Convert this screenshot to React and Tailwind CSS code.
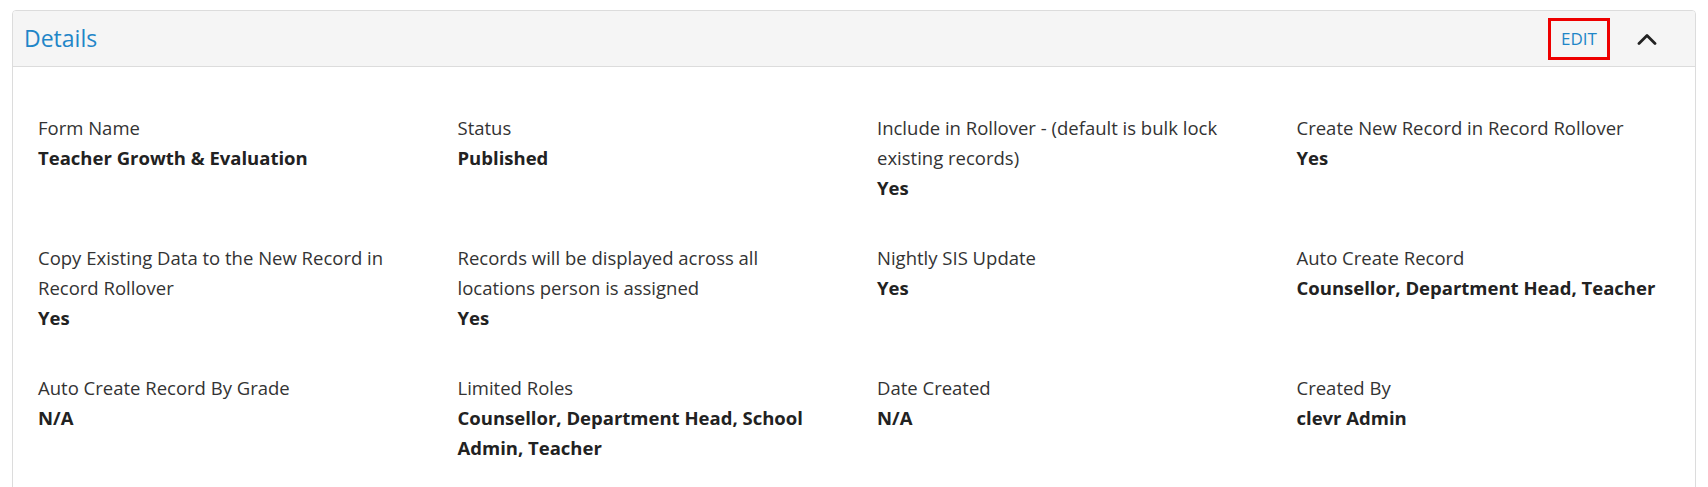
import React from 'react';

const fields = [
  { label: 'Form Name', value: 'Teacher Growth & Evaluation' },
  { label: 'Status', value: 'Published' },
  { label: 'Include in Rollover - (default is bulk lock existing records)', value: 'Yes' },
  { label: 'Create New Record in Record Rollover', value: 'Yes' },
  { label: 'Copy Existing Data to the New Record in Record Rollover', value: 'Yes' },
  { label: 'Records will be displayed across all locations person is assigned', value: 'Yes' },
  { label: 'Nightly SIS Update', value: 'Yes' },
  { label: 'Auto Create Record', value: 'Counsellor, Department Head, Teacher' },
  { label: 'Auto Create Record By Grade', value: 'N/A' },
  { label: 'Limited Roles', value: 'Counsellor, Department Head, School Admin, Teacher' },
  { label: 'Date Created', value: 'N/A' },
  { label: 'Created By', value: 'clevr Admin' },
];

function ChevronUp() {
  return (
    <svg width="20" height="12" viewBox="0 0 20 12" fill="none">
      <path d="M2 10.5 L10 2.5 L18 10.5" stroke="#222" strokeWidth="2.8" strokeLinecap="round" strokeLinejoin="round" />
    </svg>
  );
}

export default function App() {
  return (
    <div className="min-h-screen bg-white pt-[10px] px-[12px] font-['Open_Sans',sans-serif]">
      <div className="border border-[#dcdcdc] rounded-[4px] overflow-hidden">
        <div className="h-[56px] bg-[#f5f5f5] border-b border-[#dcdcdc] flex items-center justify-between pl-[11px] pr-[38px]">
          <h2 className="text-[23px] text-[#1f86c8] leading-none">Details</h2>
          <div className="flex items-center gap-[27px]">
            <button className="w-[62px] h-[42px] border-[3px] border-[#ee0000] text-[17px] text-[#1f86c8] flex items-center justify-center">
              EDIT
            </button>
            <ChevronUp />
          </div>
        </div>
        <div className="pt-[46px] pb-[40px] pl-[25px] grid grid-cols-[repeat(4,375px)] gap-x-[44.5px] gap-y-[40px]">
          {fields.map((f) => (
            <div key={f.label} className="text-[18.5px] leading-[30px]">
              <div className="text-[#333]">{f.label}</div>
              <div className="font-bold text-[#222]">{f.value}</div>
            </div>
          ))}
        </div>
      </div>
    </div>
  );
}
